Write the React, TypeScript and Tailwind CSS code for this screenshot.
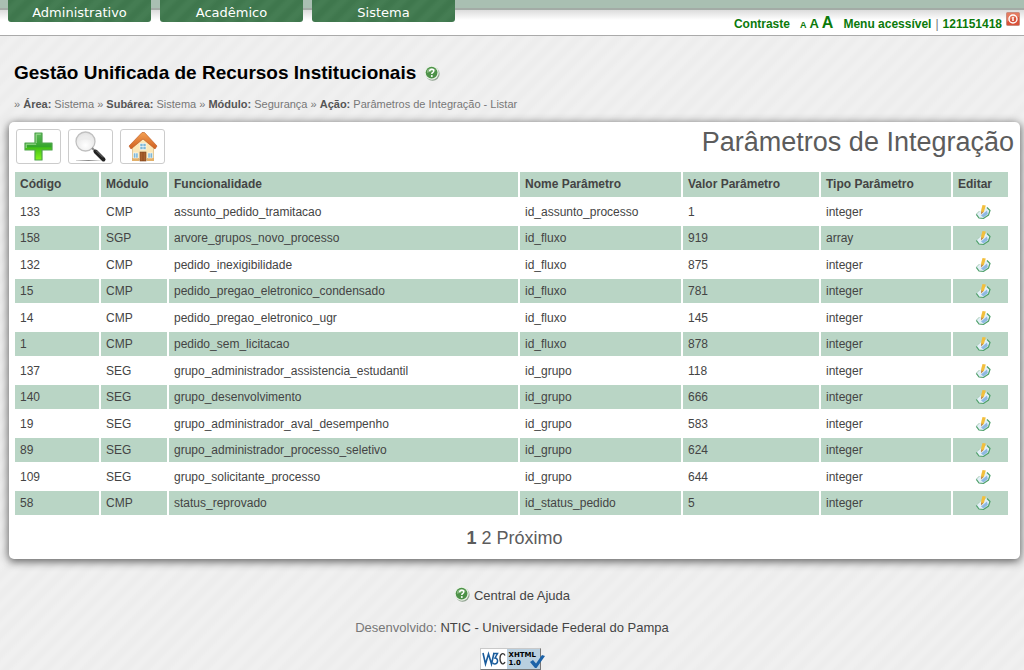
const menus = ["Administrativo", "Acadêmico", "Sistema"];

const columns = [
  { label: "Código", width: "w-[84px]" },
  { label: "Módulo", width: "w-[66px]" },
  { label: "Funcionalidade", width: "w-auto" },
  { label: "Nome Parâmetro", width: "w-[161px]" },
  { label: "Valor Parâmetro", width: "w-[136px]" },
  { label: "Tipo Parâmetro", width: "w-[130px]" },
  { label: "Editar", width: "w-[55px]" },
];

const rows = [
  ["133", "CMP", "assunto_pedido_tramitacao", "id_assunto_processo", "1", "integer"],
  ["158", "SGP", "arvore_grupos_novo_processo", "id_fluxo", "919", "array"],
  ["132", "CMP", "pedido_inexigibilidade", "id_fluxo", "875", "integer"],
  ["15", "CMP", "pedido_pregao_eletronico_condensado", "id_fluxo", "781", "integer"],
  ["14", "CMP", "pedido_pregao_eletronico_ugr", "id_fluxo", "145", "integer"],
  ["1", "CMP", "pedido_sem_licitacao", "id_fluxo", "878", "integer"],
  ["137", "SEG", "grupo_administrador_assistencia_estudantil", "id_grupo", "118", "integer"],
  ["140", "SEG", "grupo_desenvolvimento", "id_grupo", "666", "integer"],
  ["19", "SEG", "grupo_administrador_aval_desempenho", "id_grupo", "583", "integer"],
  ["89", "SEG", "grupo_administrador_processo_seletivo", "id_grupo", "624", "integer"],
  ["109", "SEG", "grupo_solicitante_processo", "id_grupo", "644", "integer"],
  ["58", "CMP", "status_reprovado", "id_status_pedido", "5", "integer"],
];

function HelpIcon() {
  return (
    <svg width="16" height="16" viewBox="0 0 16 16" aria-hidden="true">
      <circle cx="8.6" cy="8.8" r="7" fill="#8fa18f" />
      <circle cx="7.8" cy="7.8" r="7" fill="#e9f3e6" />
      <circle cx="7.6" cy="7.6" r="5.9" fill="#4d9148" />
      <path d="M3 5.5a5.3 5.3 0 0 1 9 0c-3 .2-6 1-9 2.5z" fill="#86b97f" />
      <path d="M5.7 6.2c.1-2.7 4.2-2.6 4.1-.2-.1 1.5-2 1.4-2 3" fill="none" stroke="#fff" strokeWidth="1.5" />
      <circle cx="7.8" cy="11" r="1" fill="#fff" />
    </svg>
  );
}

function PowerIcon() {
  return (
    <svg width="14" height="14" viewBox="0 0 14 14" aria-hidden="true">
      <rect x=".5" y=".5" width="13" height="13" rx="1" fill="#d9523a" stroke="#c98d80" />
      <path d="M1 1h12v4C9 5 5 7 1 10z" fill="#e47a60" />
      <circle cx="7" cy="7" r="4" fill="none" stroke="#fff" strokeWidth="1.4" />
      <path d="M7 5v4" stroke="#fff" strokeWidth="1.5" />
    </svg>
  );
}

function PlusIcon() {
  return (
    <svg width="30" height="30" viewBox="0 0 30 30" aria-hidden="true">
      <defs>
        <linearGradient id="plus" x1="0" y1="0" x2="0" y2="1">
          <stop offset="0" stopColor="#5fb95c" />
          <stop offset=".5" stopColor="#35a52c" />
          <stop offset=".55" stopColor="#43c016" />
          <stop offset="1" stopColor="#86f51e" />
        </linearGradient>
      </defs>
      <path
        d="M11 1h7v10h10v7H18v10h-7V18H1v-7h10z"
        fill="url(#plus)"
        stroke="#4fa34c"
        strokeWidth="1.2"
        strokeLinejoin="round"
      />
      <path d="M12.200 11V2.200h4.600M2.200 16v-3.800h10" fill="none" stroke="#a2dc97" />
    </svg>
  );
}

function SearchIcon() {
  return (
    <svg width="32" height="32" viewBox="0 0 32 32" aria-hidden="true">
      <defs>
        <radialGradient id="lens" cx=".5" cy=".7" r=".7">
          <stop offset="0" stopColor="#fff" />
          <stop offset="1" stopColor="#e2e2e2" />
        </radialGradient>
        <linearGradient id="ground">
          <stop offset="0" stopColor="#ddd" />
          <stop offset=".5" stopColor="#888" />
          <stop offset="1" stopColor="#eee" />
        </linearGradient>
      </defs>
      <rect x="1" y="29" width="25" height="1" fill="url(#ground)" />
      <circle cx="10.5" cy="10.5" r="9.5" fill="url(#lens)" stroke="#c0c0c0" strokeWidth="1.3" />
      <path d="M3.5 10a7.500 7.500 0 0 1 14 0c-5-2-9-2-14 0z" fill="#ececec" />
      <path d="M17 17l4 4" stroke="#888" strokeWidth="2" />
      <path d="M20.5 20.5l8 8" stroke="#222" strokeWidth="4" strokeLinecap="round" />
      <path d="M21 19.500l7 7" stroke="#777" />
    </svg>
  );
}

function HomeIcon() {
  return (
    <svg width="30" height="32" viewBox="0 0 30 32" aria-hidden="true">
      <defs>
        <linearGradient id="roof" x1="0" y1="0" x2="0" y2="1">
          <stop offset="0" stopColor="#f3a052" />
          <stop offset="1" stopColor="#cf5f20" />
        </linearGradient>
      </defs>
      <path d="M4.500 15L15 6l10.500 9v14h-21z" fill="#fbe8b9" stroke="#d9b77a" strokeWidth=".7" />
      <path d="M14 1.500h2.500L29 15l-2 3L15 8 3 18l-2-3z" fill="url(#roof)" stroke="#b9541c" strokeWidth=".6" />
      <path d="M4 27h7v3H4zM19 27h7v3h-7z" fill="#e2b06a" />
      <g fill="#7fb8d6" stroke="#fff" strokeWidth=".5">
        <rect x="12" y="12.5" width="6" height="6" />
        <rect x="5.500" y="22" width="4.500" height="5" />
        <rect x="20" y="22" width="4.500" height="5" />
      </g>
      <path d="M15 12.5v6M12 15.5h6M7.700 22v5M22.200 22v5" stroke="#fff" strokeWidth=".6" />
      <rect x="12" y="21" width="6" height="9" fill="#a8602c" stroke="#7d4219" strokeWidth=".6" />
      <path d="M15 21v9" stroke="#7d4219" strokeWidth=".6" />
    </svg>
  );
}

function EditIcon() {
  return (
    <svg width="16" height="16" viewBox="0 0 16 16" aria-hidden="true">
      <path d="M1 10l4-3 7-4 3 4-2 4-5 3.5-4-.5z" fill="#e3f0f8" />
      <path d="M6 11.5l6-5 .8 3.500-4.300 3.500z" fill="#8fb8e2" />
      <path d="M12 3.500l3 3-1.500 4.500-5 3.500-4.500-.5-2.700-3.700" fill="none" stroke="#4fa06a" strokeWidth="1.200" />
      <path d="M4.500 7L1.500 10" stroke="#a8cbb4" />
      <path d="M7.500 1l3.300.5L9 7.500 6 10l.2-4z" fill="#f2bf3d" />
      <path d="M6.200 7.500L6 10.500 8.500 8z" fill="#b98a55" />
    </svg>
  );
}

function XhtmlBadge() {
  return (
    <span className="flex h-[22px]">
      <span className="flex w-[61px] border border-[#c9c9c9] border-r-[#777] border-b-[#777] bg-[#b9cfdf]">
        <span className="flex w-[26px] items-center justify-center bg-white">
          <svg width="24" height="16" viewBox="0 0 24 16" role="img" aria-label="W3C" fill="none">
            <path d="M1 2l2.500 11L6.500 3l3 10L12 2" stroke="#1a5c9c" strokeWidth="1.600" />
            <path d="M11 2.500h4.500L13 7c3.500 0 3.500 6-.5 6-1 0-1.500-.5-2-1.300" stroke="#1a5c9c" strokeWidth="1.500" />
            <path d="M23 4.500C21.500 1.500 18 2 18 7.500s3.500 7 5 3.500" stroke="#333" strokeWidth="1.300" />
          </svg>
        </span>
        <span className="pt-[2px] pl-[2px] font-['DejaVu_Sans',sans-serif] text-[7px] leading-[8px] font-bold text-black">
          XHTML
          <br />
          1.0
        </span>
      </span>
      <svg className="-ml-[12px] mt-[6px] shrink-0" width="16" height="15" viewBox="0 0 16 15" aria-hidden="true">
        <path d="M1 8l3-2 3 3.500L13 1l3 1L7.500 14H6z" fill="#1b62a8" />
      </svg>
    </span>
  );
}

const toolButton =
  "flex h-[35px] w-[45px] items-center justify-center rounded-[3px] border border-[#ccc] bg-white";

export default function App() {
  return (
    <div className="min-h-screen bg-[#eee] bg-[repeating-linear-gradient(135deg,#ededed_0px,#ededed_3px,#f0f0f0_7px,#f0f0f0_10px,#ededed_14px)] font-['Liberation_Sans',Arial,sans-serif] text-xs text-[#444]">
      <header className="flex h-9 items-start justify-between border-b border-[#aaa] bg-[linear-gradient(#a9bfb2_0px,#a9bfb2_8px,#a3aba6_8px,#a3aba6_10px,#dcdcdc_10px,#fff_20px)] pr-1 pl-2">
        <nav className="flex gap-[9px]">
          {menus.map((menu) => (
            <button
              key={menu}
              className="h-[22px] w-[143px] rounded-b-[3px] bg-[repeating-linear-gradient(135deg,#3f774d_0px,#3f774d_3px,#457d53_7px,#457d53_10px,#3f774d_14px)] pt-[3px] font-['DejaVu_Sans',Verdana,sans-serif] text-[13px] leading-4 text-white"
            >
              {menu}
            </button>
          ))}
        </nav>
        <div className="flex items-baseline pt-3 font-bold text-[#0b7a0b]">
          <a href="#contraste" className="mr-[10px]">Contraste</a>
          <a href="#menor" className="mr-[3px] text-[9px]">A</a>
          <a href="#normal" className="mr-[3px] text-[13px]">A</a>
          <a href="#maior" className="mr-[10px] text-[16px]">A</a>
          <a href="#menu">Menu acessível</a>
          <span className="mx-1 font-normal text-[#777]">|</span>
          <span>121151418</span>
          <button aria-label="Sair" className="ml-1 self-start">
            <PowerIcon />
          </button>
        </div>
      </header>

      <div className="px-[14px] pt-[25px]">
        <div className="flex items-center gap-2">
          <h1 className="text-[19px] leading-6 font-bold text-black">
            Gestão Unificada de Recursos Institucionais
          </h1>
          <button aria-label="Ajuda">
            <HelpIcon />
          </button>
        </div>
        <p className="mt-[11px] text-[11px] leading-4 text-[#777] [&>b]:text-[#555]">
          » <b>Área:</b> Sistema » <b>Subárea:</b> Sistema » <b>Módulo:</b> Segurança »{" "}
          <b>Ação:</b> Parâmetros de Integração - Listar
        </p>
      </div>

      <main className="mt-[10px] mr-1 ml-[9px] rounded-[5px] bg-white pb-[10px] shadow-[0_2px_9px_1px_#666]">
        <div className="flex justify-between pt-[7px] pr-[6px] pl-[7px]">
          <div className="flex gap-[7px]">
            <button className={toolButton} aria-label="Adicionar">
              <PlusIcon />
            </button>
            <button className={toolButton} aria-label="Pesquisar">
              <SearchIcon />
            </button>
            <button className={toolButton} aria-label="Início">
              <HomeIcon />
            </button>
          </div>
          <h2 className="text-[27px] leading-[27px] text-[#5c5c5c]">Parâmetros de Integração</h2>
        </div>

        <div className="pt-[6px] pr-[10px] pl-[4px]">
          <table className="w-full table-fixed border-separate border-spacing-[2px]">
            <thead>
              <tr className="h-[25px] bg-[#b9d5c5] text-left">
                {columns.map((column) => (
                  <th key={column.label} className={`${column.width} px-[5px] pt-0 pb-px font-bold`}>
                    {column.label}
                  </th>
                ))}
              </tr>
            </thead>
            <tbody>
              {rows.map((row) => (
                <tr key={row[0]} className="h-[25px] even:h-6 even:bg-[#b9d5c5]">
                  {row.map((value, i) => (
                    <td key={i} className="px-[5px] py-0">
                      {value}
                    </td>
                  ))}
                  <td className="p-0 pl-[5px]">
                    <button className="mx-auto block" aria-label={`Editar ${row[0]}`}>
                      <EditIcon />
                    </button>
                  </td>
                </tr>
              ))}
            </tbody>
          </table>
        </div>

        <nav className="mt-[10px] text-center text-[18px] leading-[22px] text-[#5c5c5c]">
          <b>1</b> <a href="#pagina-2">2</a> <a href="#proximo">Próximo</a>
        </nav>
      </main>

      <footer className="flex flex-col items-center pt-[27px] text-[13px] leading-5">
        <a href="#ajuda" className="flex gap-1">
          <HelpIcon />
          <span>Central de Ajuda</span>
        </a>
        <p className="mt-3 text-[#777]">
          Desenvolvido: <a href="#ntic" className="text-[#444]">NTIC - Universidade Federal do Pampa</a>
        </p>
        <a href="#xhtml" className="mt-[10px]">
          <XhtmlBadge />
        </a>
      </footer>
    </div>
  );
}
